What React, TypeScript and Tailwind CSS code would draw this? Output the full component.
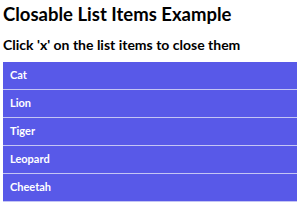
import React, { useState } from 'react';

const ANIMALS = ['Cat', 'Lion', 'Tiger', 'Leopard', 'Cheetah'];

export default function App() {
  const [items, setItems] = useState(ANIMALS);

  return (
    <div className="bg-white px-[3px] text-black" style={{ fontFamily: 'Lato, "Noto Sans", sans-serif' }}>
      <h1 className="pt-[2px] text-[18.5px] font-bold leading-[24px]">Closable List Items Example</h1>
      <h3 className="mt-[9px] text-[14px] font-bold leading-[20px]">Click 'x' on the list items to close them</h3>
      <ul className="mt-[7px]">
        {items.map(name => (
          <li
            key={name}
            onClick={() => setItems(prev => prev.filter(n => n !== name))}
            className="flex h-[28px] items-center border-b border-[#c4c5f4] bg-[#5859e8] pl-[7px] text-[11px] font-bold text-white"
          >
            {name}
          </li>
        ))}
      </ul>
    </div>
  );
}
